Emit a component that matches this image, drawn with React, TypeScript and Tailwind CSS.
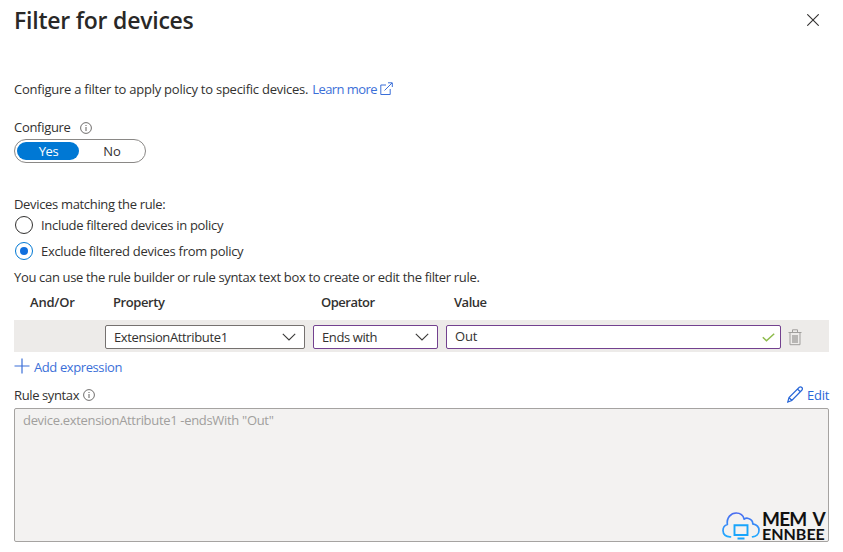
import React from "react";

function InfoIcon() {
  return (
    <svg width="12" height="12" viewBox="0 0 12 12" fill="none" stroke="#605e5c" className="shrink-0">
      <circle cx="6" cy="6" r="5.4" strokeWidth="0.9" />
      <path d="M6 5v4M6 3v1" strokeWidth="1" />
    </svg>
  );
}

function Chevron() {
  return (
    <svg width="14" height="8" viewBox="0 0 14 8" fill="none" stroke="#3b3a39" strokeWidth="1.1" className="shrink-0">
      <path d="M.8.8 7 7 13.2.8" />
    </svg>
  );
}

function CloudLogo() {
  return (
    <svg width="38" height="30" viewBox="0 0 38 30" fill="none" className="shrink-0">
      <defs>
        <linearGradient id="cloud" x1="0" y1="0" x2="0" y2="1">
          <stop offset="0" stopColor="#4b6cf0" />
          <stop offset="1" stopColor="#20aaff" />
        </linearGradient>
      </defs>
      <path
        d="M8.500 25.800C4 26 1 23.500 1 19.500c0-3 1.700-5.200 4.300-6C4.500 6.500 9 2 14.200 2c3.800 0 7 2.200 8 6.200M22.200 8.200C23.500 7.200 25 7 26.500 7.500c2.700.8 4.300 2.800 4.300 5.300C34.500 13.500 37 16 37 19.300c0 3.700-2.800 6.200-6.500 6.500"
        stroke="url(#cloud)"
        strokeWidth="1.700"
        strokeLinecap="round"
      />
      <path d="M12.500 14.200h13v9.800h-13z" stroke="#18a5fb" strokeWidth="1.900" />
      <path d="M15.500 27.500h7" stroke="#18a5fb" strokeWidth="2" />
    </svg>
  );
}

function Radio({ checked, label }: { checked?: boolean; label: string }) {
  return (
    <label className="flex h-[26px] items-center">
      <span
        className={`ml-px flex size-[18px] items-center justify-center rounded-full border bg-white ${checked ? "border-[#0078d4]" : "border-[#323130]"}`}
      >
        {checked && <span className="size-2 rounded-full bg-[#0f6fde]" />}
      </span>
      <span className="ml-2 tracking-[-0.3px]">{label}</span>
    </label>
  );
}

export default function App() {
  return (
    <main className="h-[552px] w-[843px] overflow-hidden bg-white pr-[14px] pl-[14px] font-['Open_Sans',sans-serif] text-[13px] leading-5 whitespace-nowrap text-[#323130]">
      <header className="flex h-10 items-center justify-between">
        <h1 className="text-[23px] leading-8 font-semibold tracking-[-0.23px] text-[#292827]">Filter for devices</h1>
        <svg width="12" height="12" viewBox="0 0 12 12" stroke="#323130" strokeWidth="1.1" className="mr-[10px]">
          <path d="m.3.3 11.400 11.400M11.700.3.3 11.700" />
        </svg>
      </header>

      <p className="mt-[39px] flex h-5 items-center">
        <span className="tracking-[-0.245px]">Configure a filter to apply policy to specific devices.</span>
        <a className="ml-1 flex items-center text-[#3b6fd8]">
          <span className="tracking-[-0.55px]">Learn more</span>
          <svg width="13" height="13" viewBox="0 0 13 13" fill="none" stroke="currentColor" className="mb-[2px] ml-[3px]">
            <path d="M6 3H.8v9.500h9.400V7M4.500 8.500 12 1M8 .8h4.300V5" />
          </svg>
        </a>
      </p>

      <div className="mt-[18px] flex h-5 items-center gap-[9px]">
        <span className="tracking-[-0.3px]">Configure</span>
        <span className="mt-[2px]"><InfoIcon /></span>
      </div>
      <div className="mt-[2px] flex h-6 w-[132px] rounded-full border border-[#8a8886] p-[2px] leading-[19px]">
        <span className="w-[62px] rounded-full bg-[#0078d4] pl-[1px] text-center tracking-[-0.4px] text-white">Yes</span>
        <span className="flex-1 pl-[2px] text-center">No</span>
      </div>

      <p className="mt-[31px] h-[18px] leading-5 tracking-[-0.33px]">Devices matching the rule:</p>
      <Radio label="Include filtered devices in policy" />
      <Radio checked label="Exclude filtered devices from policy" />
      <p className="mt-[3px] tracking-[-0.335px]">You can use the rule builder or rule syntax text box to create or edit the filter rule.</p>

      <div className="mt-[5px] grid h-7 grid-cols-[83px_208px_133px_1fr] pl-4 font-semibold">
        <span className="tracking-[-0.2px]">And/Or</span>
        <span className="tracking-[-0.4px]">Property</span>
        <span className="tracking-[-0.5px]">Operator</span>
        <span className="tracking-[-0.5px]">Value</span>
      </div>
      <div className="flex h-8 items-center bg-[#edebe9] pt-[2px] pl-[91px]">
        <div className="flex h-6 w-[200px] items-center justify-between rounded-[2px] border border-[#75716f] bg-white px-2">
          <span className="tracking-[-0.36px]">ExtensionAttribute1</span>
          <Chevron />
        </div>
        <div className="ml-2 flex h-6 w-[125px] items-center justify-between rounded-[2px] border border-[#73418f] bg-white px-2">
          <span className="tracking-[-0.4px]">Ends with</span>
          <Chevron />
        </div>
        <div className="ml-2 flex h-6 w-[335px] items-center justify-between rounded-[2px] border border-[#73418f] bg-white pr-[5px] pl-2">
          <span className="mb-[2px] tracking-[-0.2px]">Out</span>
          <svg width="13" height="9" viewBox="0 0 13 9" fill="none" stroke="#8dbb4b" strokeWidth="1.500">
            <path d="m.8 4.200 3.700 3.600L12.200.7" />
          </svg>
        </div>
        <svg width="14" height="17" viewBox="0 0 14 17" fill="none" stroke="#a19f9d" className="ml-[7px]">
          <path d="M.5 3.500h13M4.500 3V.8h5V3M2 3.500v12.200h10V3.500" />
          <path d="M4 6h6v8H4z" fill="#b8b6b4" stroke="none" />
        </svg>
      </div>

      <button className="mt-[5px] flex h-5 items-center text-[#3b6fd8]">
        <svg width="16" height="16" viewBox="0 0 16 16" stroke="currentColor" strokeWidth="1.200" className="mb-[2px]">
          <path d="M8 .5v15M.5 8h15" />
        </svg>
        <span className="ml-1 tracking-[-0.4px]">Add expression</span>
      </button>

      <div className="mt-2 flex h-5 items-center">
        <span className="tracking-[-0.38px]">Rule syntax</span>
        <span className="ml-1"><InfoIcon /></span>
        <button className="ml-auto flex items-center gap-1 text-[#2867d8]">
          <svg width="16" height="17" viewBox="0 0 16 17" fill="none" stroke="currentColor" strokeWidth="1.200" className="mb-[2px]">
            <path d="M.8 16 2 11.500 12.300 1.300c1.800-1.300 4 .9 2.700 2.700L4.800 14.500zM10.500 3l3 3M2 11.500l2.800 3" />
          </svg>
          <span className="tracking-[-0.3px]">Edit</span>
        </button>
      </div>
      <div className="mt-[3px] flex h-[134px] justify-between rounded-[2px] border border-[#a5a3a1] bg-[#f3f2f1] pl-2">
        <span className="mt-px tracking-[-0.32px] text-[#a19f9d]">device.extensionAttribute1 -endsWith "Out"</span>
        <div className="mr-[3px] flex items-end gap-[2px] self-end">
          <CloudLogo />
          <div className="w-[63px] font-['Lato',sans-serif] font-bold text-[#111]">
            <div className="text-[19px] leading-[14px] tracking-[-0.8px] [word-spacing:3px]">MEM V</div>
            <div className="text-[16px] leading-[15px]">ENNBEE</div>
          </div>
        </div>
      </div>
    </main>
  );
}
